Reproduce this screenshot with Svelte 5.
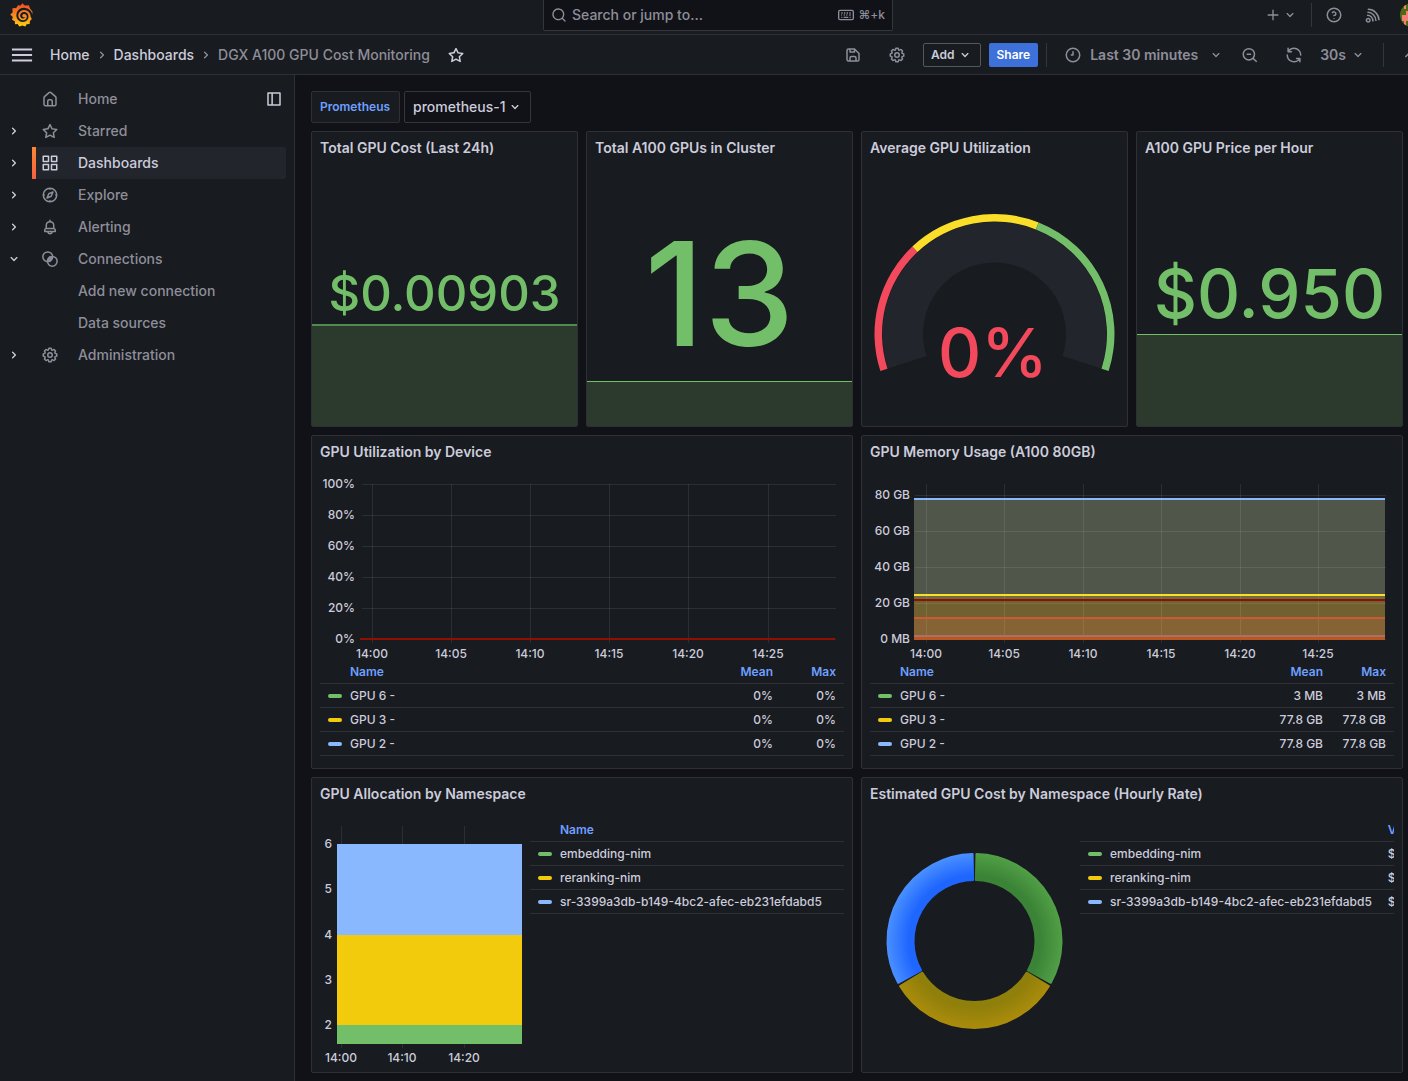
<script>
  const nav = [
    { label: 'Home', icon: 'home' },
    { label: 'Starred', icon: 'star', chevron: 'right' },
    { label: 'Dashboards', icon: 'apps', chevron: 'right', active: true },
    { label: 'Explore', icon: 'compass', chevron: 'right' },
    { label: 'Alerting', icon: 'bell', chevron: 'right' },
    { label: 'Connections', icon: 'link', chevron: 'down' },
    { label: 'Add new connection' },
    { label: 'Data sources' },
    { label: 'Administration', icon: 'cog', chevron: 'right' }
  ];

  const green = '#73bf69';
  const yellow = '#f2cc0c';
  const blue = '#8ab8ff';

  const times = ['14:00', '14:05', '14:10', '14:15', '14:20', '14:25'];
  const namespaces = [
    { name: 'embedding-nim', color: green },
    { name: 'reranking-nim', color: yellow },
    { name: 'sr-3399a3db-b149-4bc2-afec-eb231efdabd5', color: blue }
  ];
  const utilRows = [
    { name: 'GPU 6 -', color: green, values: ['0%', '0%'] },
    { name: 'GPU 3 -', color: yellow, values: ['0%', '0%'] },
    { name: 'GPU 2 -', color: blue, values: ['0%', '0%'] }
  ];
  const memRows = [
    { name: 'GPU 6 -', color: green, values: ['3 MB', '3 MB'] },
    { name: 'GPU 3 -', color: yellow, values: ['77.8 GB', '77.8 GB'] },
    { name: 'GPU 2 -', color: blue, values: ['77.8 GB', '77.8 GB'] }
  ];

  // Filled bands of the memory chart, top to bottom, each with its line on top.
  const bands = [
    { y: 23, h: 96, fill: '#50564a', line: '#8ab8ff' },
    { y: 119, h: 5, fill: '#6e6b41', line: '#fade2a' },
    { y: 124, h: 18, fill: '#716131', line: '#8f1002' },
    { y: 142, h: 18, fill: '#856334', line: '#cc5a34' },
    { y: 160, h: 2, fill: '#a8706e', line: '#a8706e' },
    { y: 162, h: 2, fill: '#c05a1e', line: '#c05a1e' }
  ];

  let utilW = $state(524);
  let memW = $state(524);
  let allocW = $state(202);

  // Minutes after 14:00 mapped on to a 30 minute wide plot.
  function tx(minute, left, width) {
    return Math.round(left + ((minute + 0.74) / 30) * width) + 0.5;
  }

  function polar(cx, cy, r, deg) {
    const a = (deg * Math.PI) / 180;
    return `${(cx + r * Math.cos(a)).toFixed(2)} ${(cy + r * Math.sin(a)).toFixed(2)}`;
  }

  function ring(cx, cy, ro, ri, from, to) {
    const large = to - from > 180 ? 1 : 0;
    return `M${polar(cx, cy, ro, from)}A${ro} ${ro} 0 ${large} 1 ${polar(cx, cy, ro, to)}L${polar(cx, cy, ri, to)}A${ri} ${ri} 0 ${large} 0 ${polar(cx, cy, ri, from)}Z`;
  }

  const solid = {
    search: 'M21.71,20.29,18,16.61A9,9,0,1,0,16.61,18l3.68,3.68a1,1,0,0,0,1.42,0A1,1,0,0,0,21.71,20.29ZM11,18a7,7,0,1,1,7-7A7,7,0,0,1,11,18Z',
    down: 'M17,9.17a1,1,0,0,0-1.41,0L12,12.71,8.46,9.17a1,1,0,0,0-1.41,0,1,1,0,0,0,0,1.42l4.24,4.24a1,1,0,0,0,1.42,0L17,10.59A1,1,0,0,0,17,9.17Z',
    up: 'M17,13.41,12.71,9.17a1,1,0,0,0-1.42,0L7.05,13.41a1,1,0,0,0,0,1.42,1,1,0,0,0,1.41,0L12,11.29l3.54,3.54a1,1,0,0,0,1.41,0A1,1,0,0,0,17,13.41Z',
    right: 'M14.83,11.29,10.59,7.05a1,1,0,0,0-1.42,0,1,1,0,0,0,0,1.41L12.71,12,9.17,15.54a1,1,0,0,0,0,1.41,1,1,0,0,0,.71.29,1,1,0,0,0,.71-.29l4.24-4.24A1,1,0,0,0,14.83,11.29Z',
    star: 'M22,9.67A1,1,0,0,0,21.14,9l-5.69-.83L12.9,3a1,1,0,0,0-1.8,0L8.55,8.16,2.86,9a1,1,0,0,0-.81.68,1,1,0,0,0,.25,1l4.13,4-1,5.68A1,1,0,0,0,6.9,21.44L12,18.77l5.1,2.67a.93.93,0,0,0,.46.12,1,1,0,0,0,.59-.19,1,1,0,0,0,.4-1l-1-5.68,4.13-4A1,1,0,0,0,22,9.67Zm-6.15,4a1,1,0,0,0-.29.88l.72,4.2-3.76-2a1.06,1.06,0,0,0-.94,0l-3.76,2,.72-4.2a1,1,0,0,0-.29-.88l-3-3,4.21-.61a1,1,0,0,0,.76-.55L12,5.7l1.88,3.82a1,1,0,0,0,.76.55l4.21.61Z',
    home: 'M20,8h0L14,2.74a3,3,0,0,0-4,0L4,8a3,3,0,0,0-1,2.26V19a3,3,0,0,0,3,3H18a3,3,0,0,0,3-3V10.25A3,3,0,0,0,20,8ZM14,20H10V15a1,1,0,0,1,1-1h2a1,1,0,0,1,1,1Zm5-1a1,1,0,0,1-1,1H16V15a3,3,0,0,0-3-3H11a3,3,0,0,0-3,3v5H6a1,1,0,0,1-1-1V10.25a1,1,0,0,1,.34-.75l6-5.25a1,1,0,0,1,1.32,0l6,5.25a1,1,0,0,1,.34.75Z',
    apps: 'M10,13H3a1,1,0,0,0-1,1v7a1,1,0,0,0,1,1h7a1,1,0,0,0,1-1V14A1,1,0,0,0,10,13ZM9,20H4V15H9ZM21,2H14a1,1,0,0,0-1,1v7a1,1,0,0,0,1,1h7a1,1,0,0,0,1-1V3A1,1,0,0,0,21,2ZM20,9H15V4h5Zm1,4H14a1,1,0,0,0-1,1v7a1,1,0,0,0,1,1h7a1,1,0,0,0,1-1V14A1,1,0,0,0,21,13Zm-1,7H15V15h5ZM10,2H3A1,1,0,0,0,2,3v7a1,1,0,0,0,1,1h7a1,1,0,0,0,1-1V3A1,1,0,0,0,10,2ZM9,9H4V4H9Z',
    bell: 'M18,13.18V10a6,6,0,0,0-5-5.91V3a1,1,0,0,0-2,0V4.09A6,6,0,0,0,6,10v3.18A3,3,0,0,0,4,16v2a1,1,0,0,0,1,1H8.14a4,4,0,0,0,7.72,0H19a1,1,0,0,0,1-1V16A3,3,0,0,0,18,13.18ZM8,10a4,4,0,0,1,8,0v3H8Zm4,10a2,2,0,0,1-1.72-1h3.44A2,2,0,0,1,12,20Zm6-3H6V16a1,1,0,0,1,1-1H17a1,1,0,0,1,1,1Z',
    save: 'M20.71,9.29l-6-6a1,1,0,0,0-.32-.21A1.09,1.09,0,0,0,14,3H6A3,3,0,0,0,3,6V18a3,3,0,0,0,3,3H18a3,3,0,0,0,3-3V10A1,1,0,0,0,20.71,9.29ZM9,5h4V7H9Zm6,14H9V16a1,1,0,0,1,1-1h4a1,1,0,0,1,1,1Zm4-1a1,1,0,0,1-1,1H17V16a3,3,0,0,0-3-3H10a3,3,0,0,0-3,3v3H6a1,1,0,0,1-1-1V6A1,1,0,0,1,6,5H7V8A1,1,0,0,0,8,9h6a1,1,0,0,0,1-1V6.41l4,4Z',
    cog: 'M21.32,9.55l-1.89-.63.89-1.78A1,1,0,0,0,20.13,6L18,3.87a1,1,0,0,0-1.15-.19l-1.78.89-.63-1.89A1,1,0,0,0,13.5,2h-3a1,1,0,0,0-.95.68L8.92,4.57,7.14,3.68A1,1,0,0,0,6,3.87L3.87,6a1,1,0,0,0-.19,1.15l.89,1.78-1.89.63A1,1,0,0,0,2,10.5v3a1,1,0,0,0,.68.95l1.89.63-.89,1.78A1,1,0,0,0,3.87,18L6,20.13a1,1,0,0,0,1.15.19l1.78-.89.63,1.89a1,1,0,0,0,.95.68h3a1,1,0,0,0,.95-.68l.63-1.89,1.78.89A1,1,0,0,0,18,20.13L20.13,18a1,1,0,0,0,.19-1.15l-.89-1.78,1.89-.63A1,1,0,0,0,22,13.5v-3A1,1,0,0,0,21.32,9.55ZM20,12.78l-1.2.4A2,2,0,0,0,17.64,16l.57,1.14-1.1,1.1L16,17.64a2,2,0,0,0-2.79,1.16l-.4,1.2H11.22l-.4-1.2A2,2,0,0,0,8,17.64l-1.14.57-1.1-1.1L6.36,16A2,2,0,0,0,5.2,13.18L4,12.78V11.22l1.2-.4A2,2,0,0,0,6.36,8L5.79,6.89l1.1-1.1L8,6.36A2,2,0,0,0,10.82,5.2l.4-1.2h1.56l.4,1.2A2,2,0,0,0,16,6.36l1.14-.57,1.1,1.1L17.64,8a2,2,0,0,0,1.16,2.79l1.2.4ZM12,8a4,4,0,1,0,4,4A4,4,0,0,0,12,8Zm0,6a2,2,0,1,1,2-2A2,2,0,0,1,12,14Z',
    sync: 'M19.91,15.51H15.38a1,1,0,0,0,0,2h2.4A8,8,0,0,1,4,12a1,1,0,0,0-2,0,10,10,0,0,0,16.88,7.23V21a1,1,0,0,0,2,0V16.5A1,1,0,0,0,19.91,15.51ZM12,2A10,10,0,0,0,5.12,4.77V3a1,1,0,0,0-2,0V7.5a1,1,0,0,0,1,1h4.5a1,1,0,0,0,0-2H6.22A8,8,0,0,1,20,12a1,1,0,0,0,2,0A10,10,0,0,0,12,2Z'
  };
  const stroked = {
    plus: 'M12 4V20M4 12H20',
    menu: 'M1 6H23M1 12H23M1 18H23',
    clock: 'M21 12A9 9 0 1 1 3 12A9 9 0 1 1 21 12ZM12 7V12H9',
    zoomout: 'M18 11A7.5 7.5 0 1 1 3 11A7.5 7.5 0 1 1 18 11ZM16 16.5L21 21M7.5 11H13.5',
    compass: 'M21 12A9 9 0 1 1 3 12A9 9 0 1 1 21 12ZM16 8L13.6 13.6L8 16L10.4 10.4ZM12 3V5M12 19V21M3 12H5M19 12H21',
    help: 'M21 12A9 9 0 1 1 3 12A9 9 0 1 1 21 12ZM9.6 9.6A2.5 2.5 0 1 1 12 12.8V13.6M12 16V17',
    link: 'M15.5 9A6.5 6.5 0 1 1 2.5 9A6.5 6.5 0 1 1 15.5 9ZM21.5 15A6.5 6.5 0 1 1 8.5 15A6.5 6.5 0 1 1 21.5 15ZM9.5 11.5L12.5 8.5M10 14L14 10M11.5 15.5L14.5 12.5',
    dock: 'M4 4H20V20H4ZM9.5 4V20',
    rss: 'M8 19A2.4 2.4 0 1 1 3.2 19A2.4 2.4 0 1 1 8 19ZM4 12.5C8 12 12 15.5 12 20.5M4.5 8.5C10.5 8 16 13.5 16 20M5 4.5C13 4 20 11 20 19',
    keyboard: 'M3 5H21A2 2 0 0 1 23 7V17A2 2 0 0 1 21 19H3A2 2 0 0 1 1 17V7A2 2 0 0 1 3 5ZM5 9H7M9 9H11M13 9H15M17 9H19M5 12H6M8.5 12H10M12.5 12H14M17 12H19M5 15.5H6.5M8.5 15.5H15.5M17.5 15.5H19'
  };
</script>

{#snippet icon(name, size = 18)}
  <svg class="icon" width={size} height={size} viewBox="0 0 24 24" aria-hidden="true">
    {#if solid[name]}
      <path d={solid[name]} fill="currentColor" />
    {:else}
      <path d={stroked[name]} fill="none" stroke="currentColor" stroke-width="2" stroke-linejoin="round" />
    {/if}
  </svg>
{/snippet}

{#snippet legend(heads, rows, clipped = false)}
  <table class="legend" class:clipped>
    <thead>
      <tr>
        <th class="name" scope="col">{heads[0]}</th>
        {#each heads.slice(1) as head}<th class="num" scope="col">{head}</th>{/each}
      </tr>
    </thead>
    <tbody>
      {#each rows as row}
        <tr>
          <td class="name"><span class="series"><i style="background:{row.color}"></i>{row.name}</span></td>
          {#each row.values ?? [] as value}<td class="num">{value}</td>{/each}
        </tr>
      {/each}
    </tbody>
  </table>
{/snippet}

{#snippet stat(title, value, size, share, lineWidth, lineColor)}
  <section class="panel">
    <h2>{title}</h2>
    <div class="stat">
      <div class="area" style="height:{share}%;border-top:{lineWidth}px solid {lineColor}"></div>
      <div class="value" style="font-size:{size}px">{value}</div>
    </div>
  </section>
{/snippet}

<div class="shell">
  <header class="top">
    <a class="logo" href="#home" aria-label="Home">
      <svg width="24" height="24" viewBox="0 0 24 24" aria-hidden="true">
        <defs>
          <linearGradient id="flame" x1="0" y1="1" x2="0" y2="0">
            <stop offset="0" stop-color="#fcd20a" />
            <stop offset="0.4" stop-color="#f8931f" />
            <stop offset="1" stop-color="#ef4a28" />
          </linearGradient>
        </defs>
        <path
          fill="url(#flame)"
          fill-rule="evenodd"
          d="M12.3.2 14.8 2.4 18.8 2.2 20 5.6 22.4 8.4 22.4 11.6 22 10.2C21 7.3 18.4 5.3 15.2 4.9 10.3 4.1 6.6 7.6 6.4 12.2 6.3 16.1 9.2 18.9 12.8 18.9 16.2 18.9 18.5 16.4 18.5 13.5 18.4 10.9 16.8 9 14.4 8.9 12 8.8 10.2 10.4 10.1 12.4 10.1 14.3 11.4 15.6 13.2 15.6 14.3 15.6 15.3 15 15.5 14.1 14.4 14.6 13.5 14.4 12.9 13.9 12 13.1 12.2 11.5 13.5 11 15.2 10.5 16.7 11.6 16.8 13.4 16.9 15.7 15.1 17.2 12.9 17.2 10.1 17.1 8.2 15 8.3 12.3 8.4 9.2 11 6.9 14.3 7 18 7.2 20.6 9.9 20.6 13.5L21.8 16 20 18 19.6 21 16.6 21.2 15.4 23.6 12.4 22.4 9.4 23.4 7.6 21 5 21.2 4.8 18.2 2 16.8 2.8 14 .2 11.6 2.6 9.4 2.4 5.2 6.2 5 8 2.2 10.6 2.4Z"
        />
      </svg>
    </a>
    <label class="search">
      {@render icon('search', 16)}
      <input type="text" aria-label="Search" placeholder="Search or jump to..." />
      <span class="keys">{@render icon('keyboard', 16)} ⌘+k</span>
    </label>
    <div class="account">
      <button class="add-menu" aria-label="New">{@render icon('plus', 16)}{@render icon('down', 16)}</button>
      <span class="rule"></span>
      <button aria-label="Help">{@render icon('help')}</button>
      <button aria-label="News">{@render icon('rss')}</button>
      <button class="avatar" aria-label="Profile">
        <svg width="24" height="24" viewBox="0 0 12 12" aria-hidden="true">
          <rect width="12" height="12" fill="#4d6b12" />
          <path fill="#f77f78" d="M2 1H3V3H2ZM4 2H6V4H4ZM3 4H4V6H3ZM1 6H4V9H1ZM2 9H3V11H2ZM6 6H9V10H6ZM8 2H10V4H8Z" />
        </svg>
      </button>
    </div>
  </header>

  <div class="bar">
    <button class="menu" aria-label="Toggle menu">{@render icon('menu', 22)}</button>
    <nav class="crumbs" aria-label="Breadcrumbs">
      <a href="#home">Home</a>
      {@render icon('right', 16)}
      <a href="#dashboards">Dashboards</a>
      {@render icon('right', 16)}
      <span>DGX A100 GPU Cost Monitoring</span>
    </nav>
    <button class="fav" aria-label="Mark as favorite">{@render icon('star')}</button>
    <div class="tools">
      <button class="tool" aria-label="Save dashboard">{@render icon('save')}</button>
      <button class="tool" aria-label="Dashboard settings">{@render icon('cog')}</button>
      <button class="add">Add {@render icon('down', 16)}</button>
      <button class="share">Share</button>
      <span class="rule"></span>
      <button class="range">{@render icon('clock')} Last 30 minutes {@render icon('down', 16)}</button>
      <button class="tool" aria-label="Zoom out">{@render icon('zoomout')}</button>
      <button class="tool" aria-label="Refresh">{@render icon('sync')}</button>
      <button class="every">30s {@render icon('down', 16)}</button>
      <span class="rule"></span>
      <button class="fold" aria-label="Hide toolbar">{@render icon('up')}</button>
    </div>
  </div>

  <div class="body">
    <nav class="side" aria-label="Main">
      {#each nav as item}
        <div class="item">
          {#if item.chevron}
            <button class="expand" aria-label="Toggle {item.label}">{@render icon(item.chevron, 16)}</button>
          {:else}
            <span class="expand"></span>
          {/if}
          <a href="#nav" class:active={item.active}>
            <span class="glyph">{#if item.icon}{@render icon(item.icon)}{/if}</span>
            {item.label}
          </a>
          {#if item.icon === 'home'}
            <button class="dock" aria-label="Undock menu">{@render icon('dock')}</button>
          {/if}
        </div>
      {/each}
    </nav>

    <main>
      <div class="vars">
        <label for="source">Prometheus</label>
        <div class="pick">
          <select id="source"><option>prometheus-1</option></select>
          {@render icon('down', 16)}
        </div>
      </div>

      <div class="grid">
        {@render stat('Total GPU Cost (Last 24h)', '$0.00903', 49, 39, 2, '#518a4f')}
        {@render stat('Total A100 GPUs in Cluster', '13', 144, 17, 1, green)}

        <section class="panel">
          <h2>Average GPU Utilization</h2>
          <svg class="gauge" viewBox="0 0 265 262" role="img" aria-label="Average GPU utilization 0%">
            <path d={ring(132.5, 170, 112, 71.5, 162, 378)} fill="#22252b" />
            <path d={ring(132.5, 170, 120, 112.5, 162, 226.8)} fill="#f2495c" />
            <path d={ring(132.5, 170, 120, 112.5, 226.8, 291.6)} fill="#fade2a" />
            <path d={ring(132.5, 170, 120, 112.5, 291.6, 378)} fill={green} />
            <text x="131" y="213" text-anchor="middle">0%</text>
          </svg>
        </section>

        {@render stat('A100 GPU Price per Hour', '$0.950', 67, 35, 1, green)}

        <section class="panel wide">
          <h2>GPU Utilization by Device</h2>
          <div class="stacked">
            <div class="plot" bind:clientWidth={utilW}>
              <svg class="axis" width={utilW} height="184" role="img" aria-label="GPU utilization over time">
                {#each [100, 80, 60, 40, 20, 0] as p, i}
                  <line x1="42" x2={utilW - 8} y1={8.5 + i * 31} y2={8.5 + i * 31} />
                  <text x="35" y={12 + i * 31} text-anchor="end">{p}%</text>
                {/each}
                {#each times as t, i}
                  <line x1={tx(i * 5, 40, utilW - 49)} x2={tx(i * 5, 40, utilW - 49)} y1="8" y2="167" />
                  <text x={tx(i * 5, 40, utilW - 49) - 0.5} y="182" text-anchor="middle">{t}</text>
                {/each}
                <rect x="40" y="162" width={utilW - 49} height="2" fill="#8f1002" />
              </svg>
            </div>
            {@render legend(['Name', 'Mean', 'Max'], utilRows)}
          </div>
        </section>

        <section class="panel wide">
          <h2>GPU Memory Usage (A100 80GB)</h2>
          <div class="stacked">
            <div class="plot" bind:clientWidth={memW}>
              <svg class="axis" width={memW} height="184" role="img" aria-label="GPU memory usage over time">
                {#each bands as b}
                  <rect x="44" y={b.y} width={memW - 53} height={b.h} fill={b.fill} />
                {/each}
                {#each ['80 GB', '60 GB', '40 GB', '20 GB', '0 MB'] as label, i}
                  <line x1="45" x2={memW - 8} y1={19.5 + i * 36} y2={19.5 + i * 36} />
                  <text x="40" y={23 + i * 36} text-anchor="end">{label}</text>
                {/each}
                {#each times as t, i}
                  <line x1={tx(i * 5, 44, memW - 53)} x2={tx(i * 5, 44, memW - 53)} y1="8" y2="167" />
                  <text x={tx(i * 5, 44, memW - 53) - 0.5} y="182" text-anchor="middle">{t}</text>
                {/each}
                {#each bands as b}
                  <rect x="44" y={b.y - 1} width={memW - 53} height="2" fill={b.line} />
                {/each}
                <rect x="44" y="161" width={memW - 53} height="3" fill="#bb561d" />
              </svg>
            </div>
            {@render legend(['Name', 'Mean', 'Max'], memRows)}
          </div>
        </section>

        <section class="panel wide">
          <h2>GPU Allocation by Namespace</h2>
          <div class="split">
            <div class="plot" bind:clientWidth={allocW}>
              <svg class="axis" width={allocW} height="246" role="img" aria-label="GPU allocation over time">
                {#each ['14:00', '14:10', '14:20'] as t, i}
                  <line x1={tx(i * 10, 16, allocW - 17)} x2={tx(i * 10, 16, allocW - 17)} y1="8" y2="230" />
                  <text x={tx(i * 10, 16, allocW - 17) - 0.5} y="244" text-anchor="middle">{t}</text>
                {/each}
                <rect x="17" y="26" width={allocW - 17} height="91" fill={blue} />
                <rect x="17" y="117" width={allocW - 17} height="90" fill={yellow} />
                <rect x="17" y="207" width={allocW - 17} height="19" fill={green} />
                {#each [6, 5, 4, 3, 2] as n, i}
                  <text x="12" y={30 + Math.round(i * 45.25)} text-anchor="end">{n}</text>
                {/each}
              </svg>
            </div>
            <div class="side-legend">{@render legend(['Name'], namespaces)}</div>
          </div>
        </section>

        <section class="panel wide">
          <h2>Estimated GPU Cost by Namespace (Hourly Rate)</h2>
          <div class="split">
            <div class="plot">
              <svg class="donut" viewBox="0 0 202 246" role="img" aria-label="Cost share by namespace">
                <defs>
                  {#each [['dg', '#3b8437', '#519f46'], ['dy', '#8f7f0b', '#ab8c0b'], ['db', '#1f66ff', '#4a90ff']] as [id, from, to]}
                    <radialGradient {id} gradientUnits="userSpaceOnUse" cx="104.5" cy="123" r="88">
                      <stop offset="0.75" stop-color={from} />
                      <stop offset="1" stop-color={to} />
                    </radialGradient>
                  {/each}
                </defs>
                <g stroke-width="2" stroke-linejoin="round">
                  <path d={ring(104.5, 123, 87, 61, -88.7, 28.7)} fill="url(#dg)" stroke="url(#dg)" />
                  <path d={ring(104.5, 123, 87, 61, 31.3, 148.7)} fill="url(#dy)" stroke="url(#dy)" />
                  <path d={ring(104.5, 123, 87, 61, 151.3, 268.7)} fill="url(#db)" stroke="url(#db)" />
                </g>
              </svg>
            </div>
            <div class="side-legend">
              {@render legend(['', 'Value'], namespaces.map((n) => ({ ...n, values: ['$0.950'] })), true)}
            </div>
          </div>
        </section>
      </div>
    </main>
  </div>
</div>

<style>
  :global(body) {
    background: #111217;
  }
  .shell {
    display: flex;
    flex-direction: column;
    min-height: 100vh;
    overflow: hidden;
    color: #ccccdc;
    font: 500 14px/22px Inter, 'Liberation Sans', sans-serif;
  }
  .shell * {
    box-sizing: border-box;
  }
  button,
  input,
  select {
    margin: 0;
    padding: 0;
    border: 0;
    background: none;
    color: inherit;
    font: inherit;
  }
  button {
    display: flex;
    align-items: center;
    justify-content: center;
  }
  a {
    color: inherit;
    text-decoration: none;
  }
  .icon {
    display: block;
    flex: none;
  }
  .rule {
    width: 1px;
    height: 24px;
    background: #34363c;
  }

  .top {
    display: grid;
    grid-template-columns: 1fr 350px 1fr;
    height: 35px;
    /* The profile button hangs over the right edge of the window. */
    margin-right: -28px;
    background: #181b1f;
    border-bottom: 1px solid #2e3036;
  }
  .logo {
    padding: 3px 10px;
  }
  .logo svg {
    display: block;
  }
  .search {
    display: flex;
    align-items: center;
    gap: 5px;
    height: 31px;
    padding: 0 7px;
    background: #111217;
    border: 1px solid #34363c;
    border-top: 0;
    border-radius: 0 0 2px 2px;
    color: #8e8e9a;
  }
  .search input {
    flex: 1;
    min-width: 0;
    outline: none;
  }
  .search input::placeholder {
    color: #8e8e9a;
    opacity: 1;
  }
  .keys {
    display: flex;
    align-items: center;
    gap: 4px;
    font-size: 12px;
  }
  .account {
    display: flex;
    align-items: center;
    justify-content: flex-end;
    height: 30px;
    padding-right: 12px;
    color: #8e8e9a;
  }
  .add-menu {
    gap: 1px;
    margin-right: 13px;
  }
  .account button + button {
    margin-left: 21px;
  }
  .account .rule + button {
    margin-left: 13px;
  }
  .account .avatar {
    overflow: hidden;
    width: 24px;
    height: 24px;
    margin-left: 18px;
    border-radius: 50%;
  }

  .bar {
    display: flex;
    align-items: center;
    height: 40px;
    padding-left: 11px;
    background: #181b1f;
    border-bottom: 1px solid #2e3036;
  }
  .crumbs {
    display: flex;
    align-items: center;
    gap: 4px;
    margin-left: 17px;
    white-space: nowrap;
  }
  .crumbs span,
  .crumbs .icon {
    color: #8e8e9a;
  }
  .fav {
    margin-left: 17px;
  }
  .tools {
    display: flex;
    align-items: center;
    margin-left: auto;
    margin-right: -10px;
    color: #8e8e9a;
    white-space: nowrap;
  }
  .tool {
    width: 44px;
    height: 32px;
  }
  .add,
  .share {
    height: 24px;
    border-radius: 2px;
    font-size: 12px;
    font-weight: 600;
  }
  .add {
    gap: 2px;
    margin: 0 8px 0 4px;
    padding: 0 7px;
    border: 1px solid #55575f;
    color: #ccccdc;
  }
  .share {
    margin-right: 8px;
    padding: 0 8px;
    background: #3d71d9;
    color: #fff;
  }
  .range {
    gap: 8px;
    margin-left: 17px;
    margin-right: 4px;
    font-weight: 600;
  }
  .range .icon:last-child {
    margin-left: 2px;
  }
  .every {
    gap: 4px;
    margin: 0 17px 0 4px;
    font-weight: 600;
  }
  .fold {
    width: 18px;
    margin-left: 16px;
  }

  .body {
    display: flex;
    flex: 1;
  }
  .side {
    flex: none;
    width: 295px;
    padding: 8px 8px 0 0;
    background: #181b1f;
    border-right: 1px solid #2e3036;
    color: #8e8e9a;
  }
  .item {
    display: flex;
    align-items: center;
    height: 32px;
  }
  .expand {
    width: 28px;
    height: 32px;
    margin-right: 4px;
    color: #ccccdc;
  }
  .item a {
    display: flex;
    flex: 1;
    align-items: center;
    gap: 19px;
    height: 32px;
    padding-left: 5px;
    border-left: 4px solid transparent;
  }
  .item a.active {
    background: #22252b;
    border-image: linear-gradient(#ff8833, #f55f3e) 1;
    border-radius: 2px;
    color: #ccccdc;
  }
  .glyph {
    width: 18px;
  }
  .dock {
    margin-right: 3px;
    color: #ccccdc;
  }

  main {
    flex: 1;
    min-width: 0;
    padding: 16px 5px 8px 16px;
  }
  .vars {
    display: flex;
    gap: 4px;
    margin-bottom: 8px;
  }
  .vars label {
    display: flex;
    align-items: center;
    min-width: 89px;
    height: 32px;
    padding: 0 8px;
    background: #181b1f;
    border: 1px solid #2e3036;
    border-radius: 2px;
    color: #6e9fff;
    font-size: 12px;
    font-weight: 600;
  }
  .pick {
    display: grid;
    align-items: center;
    width: 127px;
    height: 32px;
    border: 1px solid #34363c;
    border-radius: 2px;
  }
  .pick select,
  .pick .icon {
    grid-area: 1 / 1;
  }
  .pick select {
    height: 30px;
    padding: 0 22px 0 8px;
    appearance: none;
  }
  .pick select option {
    background: #181b1f;
  }
  .pick .icon {
    justify-self: end;
    margin-right: 7px;
    pointer-events: none;
  }

  .grid {
    display: grid;
    grid-template-columns: repeat(4, minmax(0, 1fr));
    grid-template-rows: 296px 334px 296px;
    gap: 8px;
  }
  .panel {
    display: flex;
    flex-direction: column;
    overflow: hidden;
    background: #181b1f;
    border: 1px solid #2e3036;
    border-radius: 2px;
  }
  .wide {
    grid-column: span 2;
  }
  h2 {
    flex: none;
    height: 32px;
    margin: 0;
    padding: 0 8px;
    font-size: 14px;
    font-weight: 600;
    line-height: 32px;
    white-space: nowrap;
  }
  .stat {
    display: grid;
    flex: 1;
  }
  .stat > * {
    grid-area: 1 / 1;
  }
  .area {
    align-self: end;
    background: #2b3a2d;
  }
  .value {
    place-self: center;
    padding-bottom: 3px;
    color: #73bf69;
    line-height: 1;
  }
  .gauge {
    flex: 1;
    width: 100%;
    min-height: 0;
  }
  .gauge text {
    fill: #f2495c;
    font-size: 67px;
  }

  .stacked {
    display: flex;
    flex: 1;
    flex-direction: column;
    padding: 8px;
  }
  .plot {
    min-width: 0;
  }
  .plot svg {
    display: block;
  }
  .axis text {
    fill: #ccccdc;
    font-size: 12px;
  }
  .axis line {
    stroke: rgba(240, 250, 255, 0.09);
  }
  .split {
    display: grid;
    flex: 1;
    grid-template-columns: 202fr 314fr;
    gap: 8px;
    padding: 8px;
  }
  .donut {
    width: 100%;
    overflow: visible;
  }
  .side-legend {
    min-width: 0;
    overflow: hidden;
  }

  .legend {
    width: 100%;
    border-collapse: separate;
    border-spacing: 0;
    font-size: 12px;
    line-height: 20px;
    white-space: nowrap;
  }
  .legend th,
  .legend td {
    height: 24px;
    padding: 0 8px;
    border-bottom: 1px solid #2e3036;
    text-align: right;
  }
  .legend th {
    color: #6e9fff;
    font-weight: 600;
  }
  .legend th.name {
    padding-left: 30px;
    text-align: left;
  }
  .legend td.name {
    width: 100%;
    text-align: left;
  }
  .legend.clipped .num {
    text-align: left;
  }
  .num {
    min-width: 63px;
  }
  .series {
    display: flex;
    align-items: center;
    gap: 8px;
  }
  .series i {
    width: 14px;
    height: 4px;
    border-radius: 2px;
  }
</style>
